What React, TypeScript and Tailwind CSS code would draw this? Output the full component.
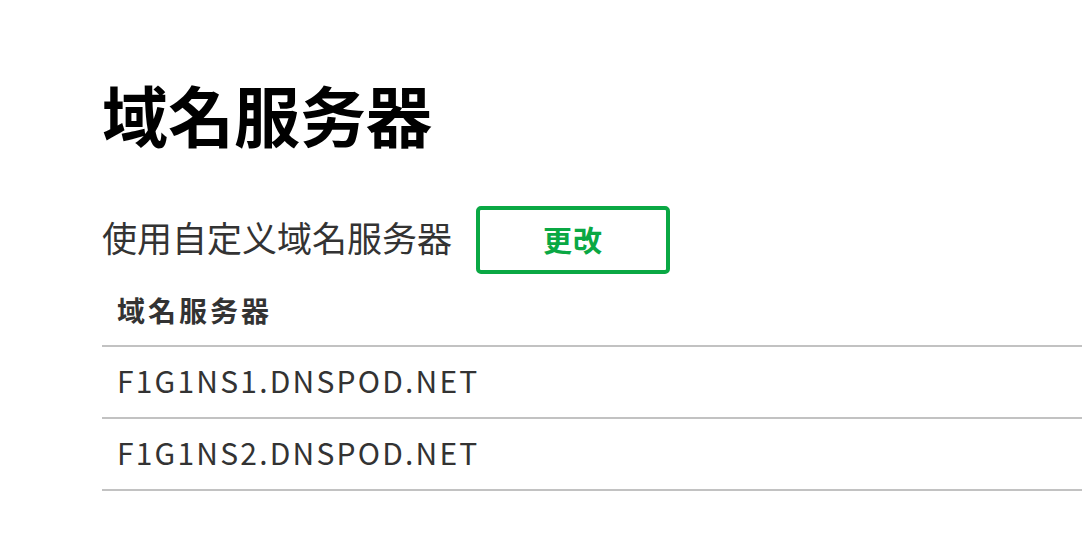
import React from "react";

const font = { fontFamily: '"Noto Sans CJK JP", "Noto Sans CJK SC", "Noto Sans", sans-serif' };

export default function App() {
  const rows = ["F1G1NS1.DNSPOD.NET", "F1G1NS2.DNSPOD.NET"];
  return (
    <div className="w-[1082px] h-[556px] bg-white overflow-hidden" style={font}>
      <div className="pl-[102px] pt-[73px]">
        <h1 className="text-[66px] leading-[80px] font-bold text-black">域名服务器</h1>
        <div className="mt-[53px] flex items-center">
          <span className="text-[35px] leading-[44px] text-[#333] pb-[6px]">使用自定义域名服务器</span>
          <button className="ml-[24px] w-[194px] h-[68px] border-4 border-[#0aa844] rounded-[5px] text-[29px] tracking-[1px] font-bold text-[#0aa844] flex items-center justify-center">
            更改
          </button>
        </div>
        <div>
          <div className="h-[73px] border-b-2 border-[#c2c2c2] pl-[15px] flex items-center text-[28px] tracking-[3px] font-bold text-[#333]">
            域名服务器
          </div>
          {rows.map((r) => (
            <div
              key={r}
              className="h-[72px] border-b-2 border-[#c2c2c2] pl-[15px] pb-[3px] flex items-center text-[30px] text-[#333] tracking-[2.2px]"
            >
              {r}
            </div>
          ))}
        </div>
      </div>
    </div>
  );
}
